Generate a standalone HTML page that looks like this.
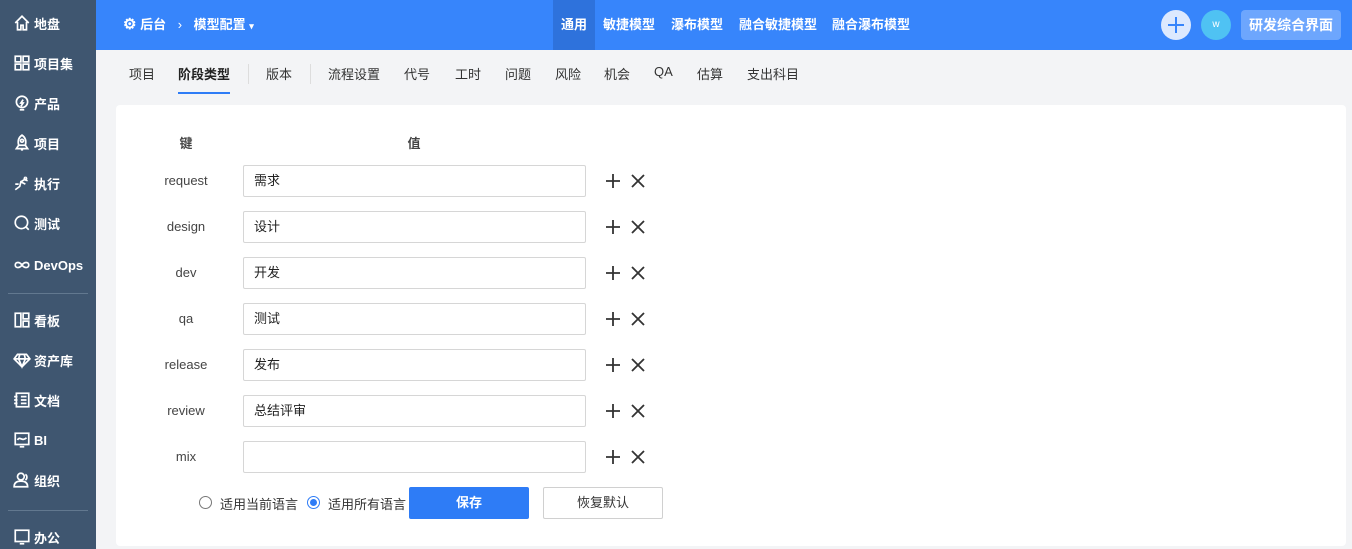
<!DOCTYPE html>
<html><head><meta charset="utf-8"><style>
*{box-sizing:border-box;margin:0;padding:0}
body{width:1352px;height:549px;overflow:hidden;background:#f3f4f6;font-family:"Liberation Sans","Noto Sans CJK SC",sans-serif;font-size:13px;color:#333;position:relative}
.side{position:absolute;left:0;top:0;width:96px;height:549px;background:#3f5670;color:#fff}
.si{position:absolute;left:13px;height:20px;display:flex;align-items:center;font-size:13px;font-weight:bold}
.si svg{width:18px;height:18px;margin-right:3px;fill:none;stroke:#fff;stroke-width:1.5}
.sep{position:absolute;left:8px;width:80px;height:1px;background:#62788f}
.top{position:absolute;left:96px;top:0;right:0;height:50px;background:#3785fb;color:#fff;font-weight:bold}
.t{position:absolute;top:0;height:50px;line-height:50px;font-size:13px}
.tabs span{position:absolute;top:64px;font-size:13px;color:#333}
.card{position:absolute;left:116px;top:105px;width:1230px;height:441px;background:#fff;border-radius:4px}
.lbl{position:absolute;width:100px;left:136px;text-align:center;font-size:13px;color:#444}
.inp{position:absolute;left:243px;width:343px;height:32px;border:1px solid #d6d6d6;border-radius:2px;padding-left:10px;line-height:30px;font-size:13px;color:#222}
.ic{position:absolute;left:605px;width:44px;height:18px}
</style></head><body>
<div class="side">
<div class="si" style="top:13px"><svg viewBox="0 0 16 16"><path d="M2 8L8 2l6 6M4 7v7h3v-4h2v4h3V7"/></svg>地盘</div>
<div class="si" style="top:53px"><svg viewBox="0 0 16 16"><rect x="2" y="2" width="5" height="5"/><rect x="9" y="2" width="5" height="5"/><rect x="2" y="9" width="5" height="5"/><rect x="9" y="9" width="5" height="5"/></svg>项目集</div>
<div class="si" style="top:93px"><svg viewBox="0 0 16 16"><circle cx="8" cy="7" r="5"/><path d="M6 14h4M9 5l-2 3h2l-2 3"/></svg>产品</div>
<div class="si" style="top:133px"><svg viewBox="0 0 16 16"><path d="M8 1c3 2 4 5 3 9H5C4 6 5 3 8 1zM5 10l-2 3h10l-2-3M7 14h2"/><circle cx="8" cy="6" r="1.3"/></svg>项目</div>
<div class="si" style="top:173px"><svg viewBox="0 0 16 16"><path d="M2 14l4-3 1-4 4 2M7 7l3-2 3 1M11 3a1 1 0 1 0 0.1 0M2 9h3"/></svg>执行</div>
<div class="si" style="top:213px"><svg viewBox="0 0 16 16"><circle cx="7.5" cy="7.5" r="5.5"/><path d="M11 11l3 3"/></svg>测试</div>
<div class="si" style="top:255px"><svg viewBox="0 0 16 16"><path d="M8 8c-2-3-6-3-6 0s4 3 6 0 6-3 6 0-4 3-6 0z"/></svg>DevOps</div>
<div class="sep" style="top:293px"></div>
<div class="si" style="top:310px"><svg viewBox="0 0 16 16"><rect x="2" y="2" width="5" height="12"/><rect x="9" y="2" width="5" height="5"/><rect x="9" y="9" width="5" height="5"/></svg>看板</div>
<div class="si" style="top:350px"><svg viewBox="0 0 16 16"><path d="M4 3h8l3 4-7 7-7-7zM1 7h14M6 3L5 7l3 7 3-7-1-4"/></svg>资产库</div>
<div class="si" style="top:390px"><svg viewBox="0 0 16 16"><rect x="3" y="2" width="11" height="12"/><path d="M1 5h3M1 8h3M1 11h3M7 5h5M7 8h5M7 11h5"/></svg>文档</div>
<div class="si" style="top:430px"><svg viewBox="0 0 16 16"><rect x="2" y="2" width="12" height="10"/><path d="M4 8c2-4 4 2 8-2M6 14h4"/></svg>BI</div>
<div class="si" style="top:470px"><svg viewBox="0 0 16 16"><circle cx="7" cy="5" r="3"/><path d="M1 14c0-4 3-5 6-5s6 1 6 5zM11 3a3 3 0 0 1 0 5"/></svg>组织</div>
<div class="sep" style="top:510px"></div>
<div class="si" style="top:527px"><svg viewBox="0 0 16 16"><rect x="2" y="2" width="12" height="10"/><path d="M6 14h4"/></svg>办公</div>
</div>
<div class="top">
<div class="t" style="left:27px"><span style="font-size:15px">⚙</span> 后台 <span style="margin:0 8px;font-weight:normal">›</span> 模型配置 <span style="font-size:9px">▾</span></div>
<div class="t" style="left:457px;width:42px;text-align:center;background:#2e72dc">通用</div>
<div class="t" style="left:507px">敏捷模型</div>
<div class="t" style="left:575px">瀑布模型</div>
<div class="t" style="left:643px">融合敏捷模型</div>
<div class="t" style="left:736px">融合瀑布模型</div>
<div style="position:absolute;left:1065px;top:10px;width:30px;height:30px;border-radius:50%;background:#dce9fe"><div style="position:absolute;left:7px;top:14px;width:16px;height:2px;background:#3785fb"></div><div style="position:absolute;left:14px;top:7px;width:2px;height:16px;background:#3785fb"></div></div>
<div style="position:absolute;left:1105px;top:10px;width:30px;height:30px;border-radius:50%;background:#4fc2f3;text-align:center;line-height:30px;font-size:10px;font-weight:normal">w</div>
<div style="position:absolute;left:1145px;top:10px;width:100px;height:30px;border-radius:4px;background:#6da6fd;text-align:center;line-height:30px;font-size:14px">研发综合界面</div>
</div>
<div class="tabs">
<span style="left:129px">项目</span><span style="left:178px;font-weight:bold;color:#222">阶段类型</span>
<div style="position:absolute;left:178px;top:92px;width:52px;height:2px;background:#2e7cf6"></div>
<div style="position:absolute;left:248px;top:64px;width:1px;height:20px;background:#ddd"></div>
<span style="left:266px">版本</span>
<div style="position:absolute;left:310px;top:64px;width:1px;height:20px;background:#ddd"></div>
<span style="left:328px">流程设置</span><span style="left:404px">代号</span><span style="left:455px">工时</span><span style="left:505px">问题</span><span style="left:555px">风险</span><span style="left:604px">机会</span><span style="left:654px">QA</span><span style="left:697px">估算</span><span style="left:747px">支出科目</span>
</div>
<div class="card"></div>
<div class="lbl" style="top:133px;font-weight:bold">键</div>
<div class="lbl" style="top:133px;left:364px;font-weight:bold">值</div>
<div class="lbl" style="top:173px">request</div><div class="inp" style="top:165px">需求</div>
<div class="lbl" style="top:219px">design</div><div class="inp" style="top:211px">设计</div>
<div class="lbl" style="top:265px">dev</div><div class="inp" style="top:257px">开发</div>
<div class="lbl" style="top:311px">qa</div><div class="inp" style="top:303px">测试</div>
<div class="lbl" style="top:357px">release</div><div class="inp" style="top:349px">发布</div>
<div class="lbl" style="top:403px">review</div><div class="inp" style="top:395px">总结评审</div>
<div class="lbl" style="top:449px">mix</div><div class="inp" style="top:441px"></div>
<svg width="0" height="0" style="position:absolute"><defs><g id="pm" stroke="#333" stroke-width="1.8" fill="none"><path d="M8 2v14M1 9h14M27 3l12 12M39 3L27 15"/></g></defs></svg>
<svg class="ic" style="top:172px"><use href="#pm"/></svg>
<svg class="ic" style="top:218px"><use href="#pm"/></svg>
<svg class="ic" style="top:264px"><use href="#pm"/></svg>
<svg class="ic" style="top:310px"><use href="#pm"/></svg>
<svg class="ic" style="top:356px"><use href="#pm"/></svg>
<svg class="ic" style="top:402px"><use href="#pm"/></svg>
<svg class="ic" style="top:448px"><use href="#pm"/></svg>
<div style="position:absolute;left:199px;top:496px;width:13px;height:13px;border:1px solid #777;border-radius:50%"></div>
<div style="position:absolute;left:220px;top:494px;font-size:13px">适用当前语言</div>
<div style="position:absolute;left:307px;top:496px;width:13px;height:13px;border:1px solid #2e7cf6;border-radius:50%"><div style="margin:2px;width:7px;height:7px;border-radius:50%;background:#2e7cf6"></div></div>
<div style="position:absolute;left:328px;top:494px;font-size:13px">适用所有语言</div>
<div style="position:absolute;left:409px;top:487px;width:120px;height:32px;background:#2e7cf6;border-radius:2px;color:#fff;text-align:center;line-height:32px;font-weight:bold">保存</div>
<div style="position:absolute;left:543px;top:487px;width:120px;height:32px;border:1px solid #d0d0d0;border-radius:2px;text-align:center;line-height:30px">恢复默认</div>
</body></html>
